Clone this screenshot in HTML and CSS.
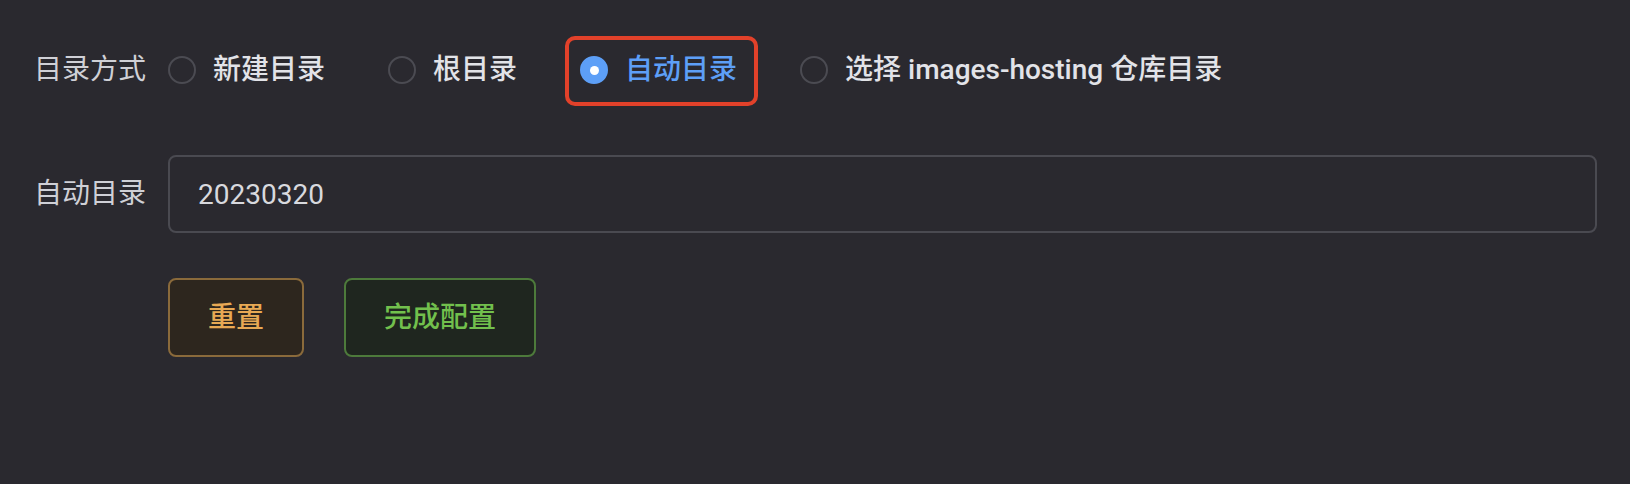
FILE: index.html
```html
<!DOCTYPE html>
<html lang="zh-CN">
<head>
<meta charset="utf-8">
<title>目录方式</title>
<link rel="stylesheet" href="styles.css">
</head>
<body>
<form class="form">
  <div class="row row-first">
    <div class="label">目录方式</div>
    <div class="radio-group">
      <label class="radio"><span class="circle"></span><span class="radio-text">新建目录</span></label>
      <label class="radio"><span class="circle"></span><span class="radio-text">根目录</span></label>
      <label class="radio is-checked highlighted"><span class="circle"></span><span class="radio-text">自动目录</span></label>
      <label class="radio"><span class="circle"></span><span class="radio-text">选择 images-hosting 仓库目录</span></label>
    </div>
  </div>
  <div class="row">
    <div class="label">自动目录</div>
    <div class="input">20230320</div>
  </div>
  <div class="row row-buttons">
    <div class="label"></div>
    <div class="buttons">
      <button type="button" class="btn btn-warning">重置</button>
      <button type="button" class="btn btn-success">完成配置</button>
    </div>
  </div>
</form>
</body>
</html>
```
FILE: styles.css
```css
html, body {
  margin: 0;
  padding: 0;
  background: #2a292f;
  width: 1630px;
  height: 484px;
  overflow: hidden;
}
body {
  font-family: Roboto, "Noto Sans CJK SC", "Noto Sans", sans-serif;
  font-size: 28px;
  color: #d4d5da;
}
.form {
  padding: 31px 33px 0 34px;
}
.row {
  display: flex;
  align-items: center;
  height: 78px;
  margin-bottom: 45px;
}
.row-first {
  margin-bottom: 46px;
}
.label {
  width: 112px;
  flex: none;
  padding-right: 22px;
  text-align: right;
  color: #cfd0d6;
  line-height: 1;
}
.radio-group {
  display: flex;
  align-items: center;
}
.radio {
  position: relative;
  display: inline-flex;
  align-items: center;
  margin-right: 63px;
  font-weight: 500;
  color: #e2e3e8;
  line-height: 1;
  white-space: nowrap;
}
.circle {
  box-sizing: border-box;
  width: 28px;
  height: 28px;
  border: 2px solid #4b4b52;
  border-radius: 50%;
  margin-right: 17px;
  flex: none;
  position: relative;
}
.is-checked .circle {
  border-color: #5d9ff7;
  background: #5d9ff7;
}
.is-checked .circle::after {
  content: "";
  position: absolute;
  left: 50%;
  top: 50%;
  width: 9px;
  height: 9px;
  margin: -4.5px 0 0 -4.5px;
  border-radius: 50%;
  background: #ffffff;
}
.is-checked .radio-text {
  color: #5d9ff7;
}
.highlighted::before {
  content: "";
  position: absolute;
  left: -15px;
  right: -21px;
  top: -20px;
  bottom: -22px;
  border: 4px solid #e2412a;
  border-radius: 10px;
  pointer-events: none;
}
.input {
  box-sizing: border-box;
  flex: 1;
  height: 78px;
  border: 2px solid #4a4a51;
  border-radius: 8px;
  padding: 0 28px;
  display: flex;
  align-items: center;
  color: #d8d9de;
  font-size: 28px;
}
.row-buttons {
  height: 79px;
}
.buttons {
  display: flex;
  gap: 40px;
}
.btn {
  box-sizing: border-box;
  height: 79px;
  padding: 0 38px;
  border: 2px solid;
  border-radius: 8px;
  font-family: Roboto, "Noto Sans CJK SC", "Noto Sans", sans-serif;
  font-size: 28px;
  font-weight: 500;
  line-height: 1;
  cursor: pointer;
}
.btn-warning {
  background: #2d261e;
  border-color: #8a6a3b;
  color: #e8a954;
}
.btn-success {
  background: #1f261f;
  border-color: #4d7a3b;
  color: #72c04d;
}
```
